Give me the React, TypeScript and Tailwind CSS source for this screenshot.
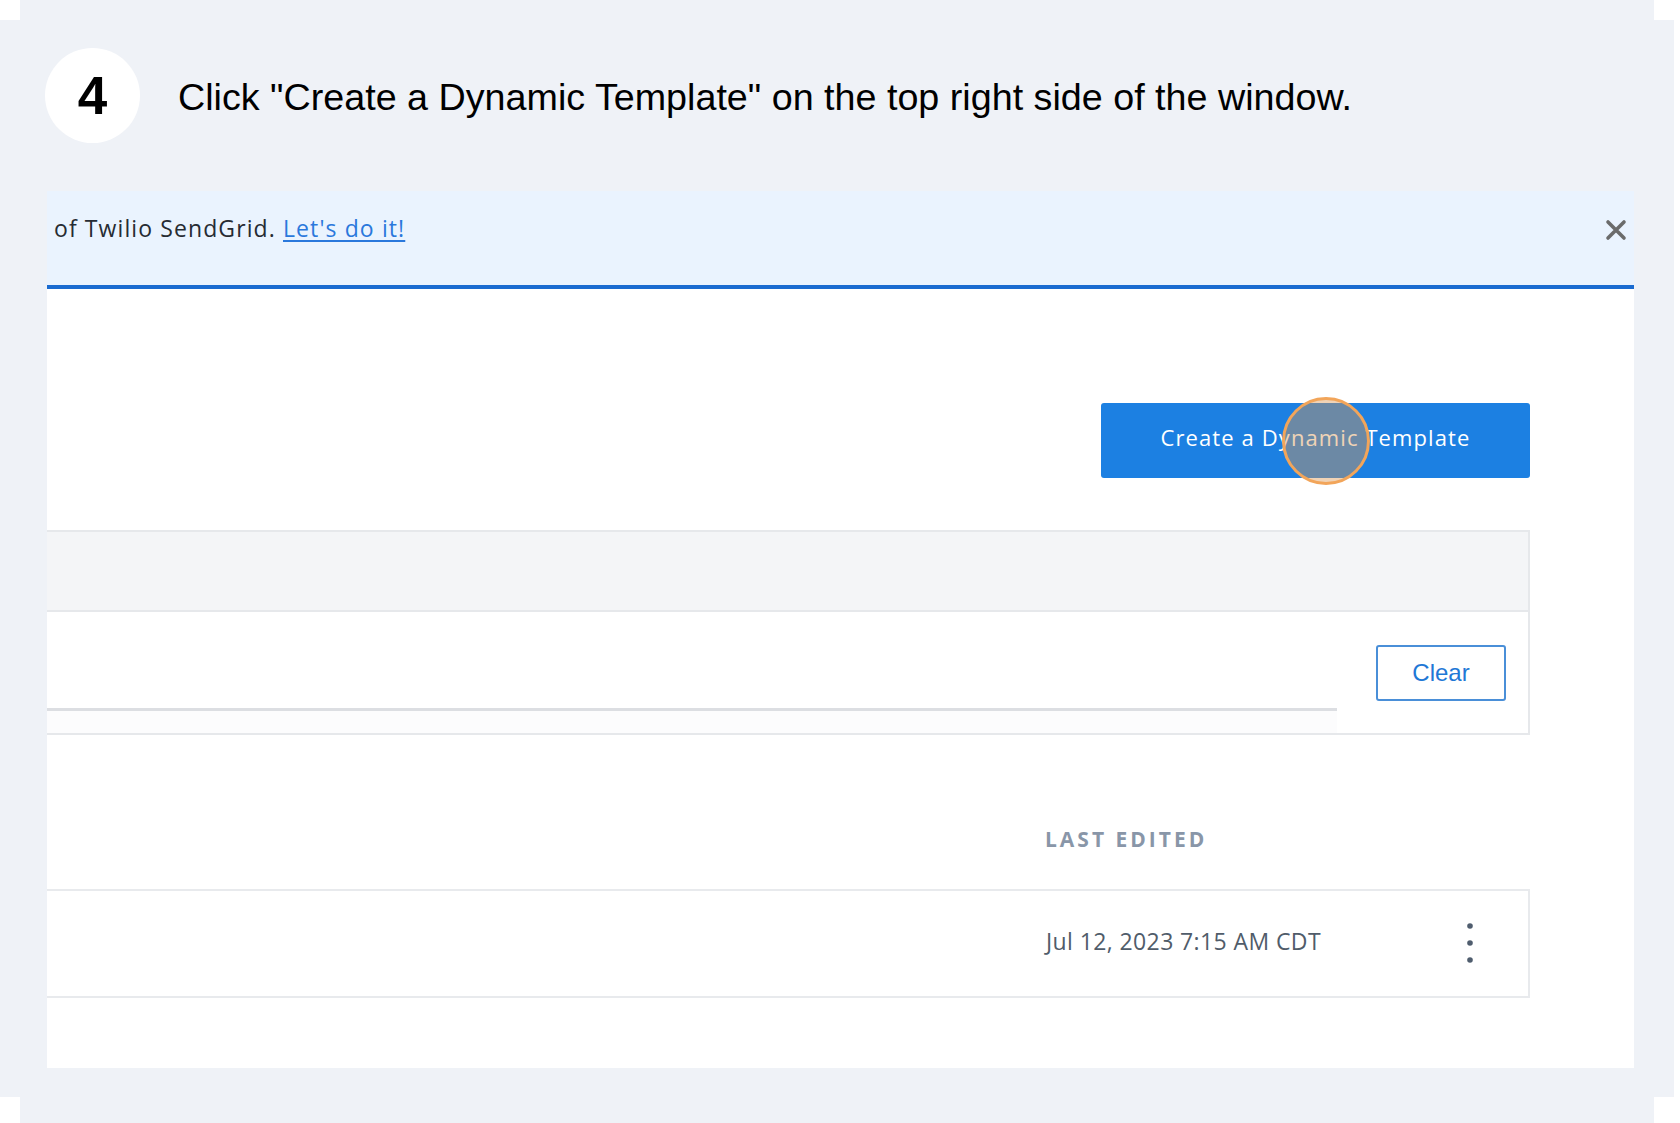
const PAGE_BG = "bg-[#eff2f7]";

function SideStrip() {
  return (
    <div className="w-[20px] flex flex-col shrink-0">
      <div className="h-[20px]" />
      <div className={`h-[1077px] ${PAGE_BG}`} />
    </div>
  );
}

function CloseIcon() {
  return (
    <svg width="22" height="22" viewBox="0 0 22 22" className="shrink-0">
      <path d="M3 3 L19 19 M19 3 L3 19" stroke="#6b6b6b" strokeWidth="3.6" strokeLinecap="round" />
    </svg>
  );
}

function Kebab() {
  return (
    <svg width="10" height="44" viewBox="0 0 10 44">
      <circle cx="5" cy="5" r="2.8" fill="#4f5d6e" />
      <circle cx="5" cy="22" r="2.8" fill="#4f5d6e" />
      <circle cx="5" cy="39" r="2.8" fill="#4f5d6e" />
    </svg>
  );
}

export default function App() {
  const ui = { fontFamily: '"Open Sans", "Noto Sans", sans-serif' };
  const helv = { fontFamily: '"Liberation Sans", Arial, sans-serif' };

  return (
    <div className="flex w-[1680px] h-[1123px] bg-white overflow-hidden">
      <SideStrip />

      <main className={`w-[1634px] h-full ${PAGE_BG} flex flex-col shrink-0`}>
        {/* step header */}
        <div className="flex items-center pt-[48px] pl-[25px]">
          <div className="w-[95px] h-[95px] rounded-full bg-white flex items-center justify-center">
            <span className="text-[53px] font-bold leading-none text-black" style={helv}>4</span>
          </div>
          <p className="ml-[38px] text-[37.7px] leading-none text-black mt-[5px]" style={helv}>
            Click "Create a Dynamic Template" on the top right side of the window.
          </p>
        </div>

        {/* screenshot panel */}
        <div className="mt-[48px] ml-[27px] w-[1587px] h-[877px] bg-white overflow-hidden flex flex-col" style={ui}>
          <div className="h-[98px] bg-[#eaf3fe] border-b-4 border-[#1a6bd0] flex items-start justify-between pl-[7px] pr-[7px] pt-[23px]">
            <p className="text-[23px] leading-[28px] tracking-[1.1px] text-[#262b33]">
              of Twilio SendGrid.{" "}
              <a className="text-[#2a78dc] underline underline-offset-[3px]">Let's do it!</a>
            </p>
            <div className="mt-[5px]">
              <CloseIcon />
            </div>
          </div>

          <div className="flex flex-col">
            <div className="relative self-end mr-[104px] mt-[114px]">
              <button className="w-[429px] h-[75px] rounded-[3px] bg-[#1c80e2] text-white text-[22px] tracking-[1.1px] pb-[6px] flex items-center justify-center">
                Create a Dynamic Template
              </button>
              <div className="absolute left-[181px] top-[-6px] w-[88px] h-[88px] rounded-full border-[3px] border-[#f2a55a] bg-[rgba(219,150,80,0.42)]" />
            </div>

            {/* filter card */}
            <div className="mt-[52px] w-[1483px] border-2 border-l-0 border-[#e6e8eb] flex flex-col">
              <div className="h-[80px] bg-[#f4f5f7] border-b-2 border-[#e6e8eb]" />
              <div className="h-[121px] flex">
                <div className="flex-1 flex flex-col">
                  <div className="flex-1 border-b-[3px] border-[#dcdee2]" />
                  <div className="h-[22px] bg-[#fcfcfd]" />
                </div>
                <button
                  className="ml-[39px] mr-[22px] mt-[33px] w-[130px] h-[56px] rounded-[3px] border-2 border-[#4a8fd8] text-[#1f78d6] text-[24px] leading-none"
                  style={helv}
                >
                  Clear
                </button>
              </div>
            </div>

            {/* table header */}
            <div className="w-[1483px] flex mt-[91px]">
              <div className="flex-1" />
              <div className="w-[485px] text-[21px] leading-[26px] font-bold tracking-[3px] text-[#8996a8]">
                LAST EDITED
              </div>
            </div>

            {/* table row */}
            <div className="mt-[37px] w-[1483px] h-[109px] border-2 border-l-0 border-[#e8eaed] flex items-center">
              <div className="flex-1" />
              <div className="w-[485px] flex items-center mb-[5px]">
                <span className="ml-[3px] text-[23px] tracking-[0.4px] text-[#505c6a]">Jul 12, 2023 7:15 AM CDT</span>
                <div className="ml-auto mr-[53px] mt-[3px]">
                  <Kebab />
                </div>
              </div>
            </div>
          </div>
        </div>
      </main>

      <SideStrip />
      <div className="w-[6px] shrink-0" />
    </div>
  );
}
